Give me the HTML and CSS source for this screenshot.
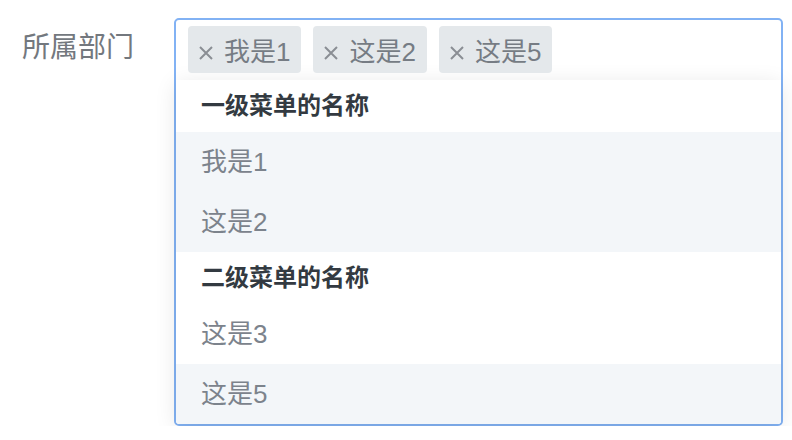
FILE: index.html
```html
<!DOCTYPE html>
<html lang="zh-CN">
<head>
  <meta charset="UTF-8">
  <title>所属部门</title>
  <link rel="stylesheet" href="styles.css">
</head>
<body>

<div class="form-item">
  <label class="form-label">所属部门</label>

  <div class="select is-open">
    <div class="select-tags">
      <span class="tag">
        <svg class="tag-close" viewBox="0 0 14 14"><path d="M1 1l12 12M13 1L1 13"/></svg>我是1
      </span>
      <span class="tag">
        <svg class="tag-close" viewBox="0 0 14 14"><path d="M1 1l12 12M13 1L1 13"/></svg>这是2
      </span>
      <span class="tag">
        <svg class="tag-close" viewBox="0 0 14 14"><path d="M1 1l12 12M13 1L1 13"/></svg>这是5
      </span>
    </div>

    <ul class="dropdown">
      <li class="group-title">一级菜单的名称</li>
      <li class="option is-selected">我是1</li>
      <li class="option is-selected">这是2</li>
      <li class="group-title">二级菜单的名称</li>
      <li class="option">这是3</li>
      <li class="option is-selected">这是5</li>
    </ul>
  </div>
</div>

</body>
</html>
```

FILE: styles.css
```css
body {
  margin: 0;
  padding: 0;
  background: #fff;
  font-family: "Liberation Sans", "Noto Sans CJK SC", sans-serif;
}
.form-item {
  display: flex;
  align-items: flex-start;
  padding: 18px 9px 0 22px;
}
.form-label {
  width: 152px;
  flex-shrink: 0;
  font-size: 28px;
  line-height: 60px;
  color: #73787e;
}
.select {
  flex: 1;
  height: 408px;
  box-sizing: border-box;
  border: 2px solid #82b2f4;
  border-radius: 5px;
  background: #fff;
}
.select-tags {
  display: flex;
  gap: 12px;
  height: 60px;
  box-sizing: border-box;
  padding: 6px 12px 0;
}
.tag {
  display: inline-flex;
  align-items: center;
  height: 47px;
  padding: 0 11px 0 11px;
  background: #e4e8eb;
  border-radius: 4px;
  font-size: 26px;
  color: #767c84;
}
.tag-close {
  width: 14px;
  height: 14px;
  margin: 6px 11px 0 0;
  fill: none;
  stroke: #8a8e94;
  stroke-width: 2;
}
.dropdown {
  list-style: none;
  margin: 0;
  padding: 0;
  background: #fff;
  border-radius: 0 0 4px 4px;
  box-shadow: 0 4px 22px rgba(0, 0, 0, 0.1);
}
.group-title {
  height: 52px;
  line-height: 52px;
  padding-left: 25px;
  font-size: 24px;
  font-weight: bold;
  color: #333a41;
}
.option {
  height: 60px;
  line-height: 60px;
  padding-left: 25px;
  font-size: 26px;
  color: #7c838c;
}
.option.is-selected {
  background: #f3f6f9;
}
.option:last-child {
  border-radius: 0 0 4px 4px;
}
```
